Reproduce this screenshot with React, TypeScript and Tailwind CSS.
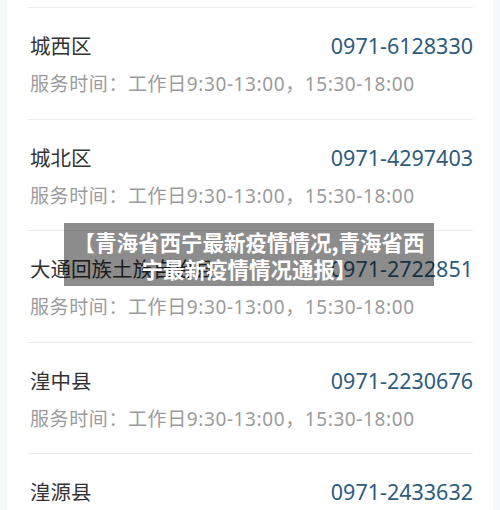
import React from "react";

const rows = [
  { name: "城西区", phone: "0971-6128330" },
  { name: "城北区", phone: "0971-4297403" },
  { name: "大通回族土族自治县", phone: "0971-2722851" },
  { name: "湟中县", phone: "0971-2230676" },
  { name: "湟源县", phone: "0971-2433632" },
];

export default function App() {
  return (
    <div
      className="relative w-[500px] h-[510px] overflow-hidden bg-[#f4f9f9]"
      style={{ fontFamily: '"Noto Sans", "Noto Sans CJK SC", sans-serif' }}
    >
      <div className="mx-[7px] h-full bg-white pt-[7px]">
        {rows.map((r) => (
          <div key={r.name} className="mx-[20px] h-[111.5px] border-t border-[#ececec]">
            <div className="flex items-center justify-between pt-[24px] h-[52px] pl-[3px] pr-0">
              <span className="text-[20.5px] leading-[28px] text-[#333333]">{r.name}</span>
              <span className="text-[21.5px] leading-[28px] text-[#2f5b7d]">{r.phone}</span>
            </div>
            <div className="pl-[3px] mt-[12px] text-[19px] leading-[24px] tracking-[0.6px] text-[#9b9b9b] whitespace-nowrap">
              服务时间：工作日9:30-13:00，15:30-18:00
            </div>
          </div>
        ))}
      </div>
      <div className="absolute left-[64px] top-[223px] w-[370px] h-[63px] bg-[#000000]/45 flex items-center justify-center">
        <div
          className="text-white font-bold text-[21.5px] leading-[27px] text-center px-[8px]"
          style={{ fontFamily: '"Noto Sans CJK SC", sans-serif' }}
        >
          【青海省西宁最新疫情情况,青海省西宁最新疫情情况通报】
        </div>
      </div>
    </div>
  );
}
